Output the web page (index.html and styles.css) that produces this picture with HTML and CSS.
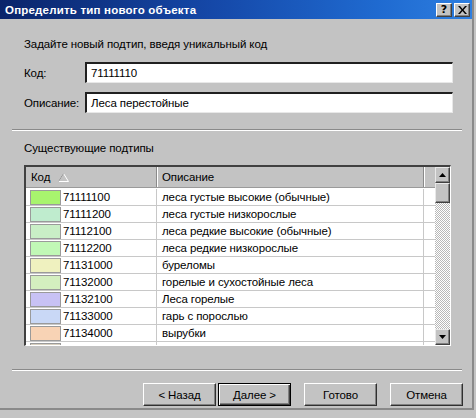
FILE: index.html
```html
<!DOCTYPE html>
<html>
<head>
<meta charset="utf-8">
<link rel="stylesheet" href="styles.css">
</head>
<body>
<div class="window">
  <div class="titlebar">
    <span class="title">Определить тип нового объекта</span>
    <div class="tbtns">
      <span class="tbtn help">?</span>
      <span class="tbtn close"><svg width="9" height="8" viewBox="0 0 9 8"><path d="M0 0h2l2.5 3 2.5-3h2l-3.5 4 3.5 4h-2l-2.5-3-2.5 3h-2l3.5-4z" fill="#000"/></svg></span>
    </div>
  </div>
  <div class="content">
    <div class="intro">Задайте новый подтип, введя уникальный код</div>
    <div class="field f1">
      <label class="lbl">Код:</label>
      <div class="input">71111110</div>
    </div>
    <div class="field f2">
      <label class="lbl">Описание:</label>
      <div class="input">Леса перестойные</div>
    </div>
    <div class="etched sep1"></div>
    <div class="section">Существующие подтипы</div>
    <div class="listbox">
      <div class="listmain">
        <div class="header">
          <div class="hcell h1">Код <svg class="sort" width="11" height="9" viewBox="0 0 11 9"><path d="M5.5 0.5L10.5 8.5H0.5Z" fill="none" stroke="#fff"/><path d="M5.5 0.5L0.5 8.5" stroke="#8c8c8c"/></svg></div>
          <div class="hcell h2">Описание</div>
          <div class="hcell h3"></div>
        </div>
        <div class="rows">
          <div class="row"><div class="c1"><span class="sw" style="background:#a8f46e"></span>71111100</div><div class="c2">леса густые высокие (обычные)</div><div class="c3"></div></div>
          <div class="row"><div class="c1"><span class="sw" style="background:#bfecce"></span>71111200</div><div class="c2">леса густые низкорослые</div><div class="c3"></div></div>
          <div class="row"><div class="c1"><span class="sw" style="background:#c9efc6"></span>71112100</div><div class="c2">леса редкие высокие (обычные)</div><div class="c3"></div></div>
          <div class="row"><div class="c1"><span class="sw" style="background:#c1f8b6"></span>71112200</div><div class="c2">леса редкие низкорослые</div><div class="c3"></div></div>
          <div class="row"><div class="c1"><span class="sw" style="background:#eff1bf"></span>71131000</div><div class="c2">буреломы</div><div class="c3"></div></div>
          <div class="row"><div class="c1"><span class="sw" style="background:#d4efbf"></span>71132000</div><div class="c2">горелые и сухостойные леса</div><div class="c3"></div></div>
          <div class="row"><div class="c1"><span class="sw" style="background:#c8c2f4"></span>71132100</div><div class="c2">Леса горелые</div><div class="c3"></div></div>
          <div class="row"><div class="c1"><span class="sw" style="background:#c9d8f6"></span>71133000</div><div class="c2">гарь с порослью</div><div class="c3"></div></div>
          <div class="row"><div class="c1"><span class="sw" style="background:#f8d3b5"></span>71134000</div><div class="c2">вырубки</div><div class="c3"></div></div>
          <div class="row"><div class="c1"><span class="sw" style="background:#d8d0c0"></span></div><div class="c2"></div><div class="c3"></div></div>
        </div>
      </div>
      <div class="scrollbar">
        <div class="sbtn"><svg width="7" height="4" viewBox="0 0 7 4"><path d="M3.5 0L7 4H0Z" fill="#000"/></svg></div>
        <div class="thumb"></div>
        <div class="track"></div>
        <div class="sbtn"><svg width="7" height="4" viewBox="0 0 7 4"><path d="M0 0H7L3.5 4Z" fill="#000"/></svg></div>
      </div>
    </div>
    <div class="etched sep2"></div>
    <div class="buttons">
      <div class="btn">&lt; Назад</div>
      <div class="btn default">Далее &gt;</div>
      <div class="btn gap">Готово</div>
      <div class="btn gap">Отмена</div>
    </div>
  </div>
</div>
</body>
</html>
```

FILE: styles.css
```css
html, body {
  margin: 0;
  padding: 0;
}
body {
  width: 476px;
  height: 418px;
  background: #c4c4c4;
  font-family: "Liberation Sans", Arial, sans-serif;
  font-size: 11.5px;
  letter-spacing: -0.1px;
  color: #000;
  overflow: hidden;
}
.window {
  width: 472px;
  height: 408px;
  background: #c3c3c3;
  border-right: 2px solid #8a8a8a;
  border-bottom: 2px solid #8a8a8a;
  display: flex;
  flex-direction: column;
}
.titlebar {
  height: 19px;
  flex: none;
  background: linear-gradient(to right, #0a246a 0%, #1548a8 45%, #1f6ad0 80%, #2d7ee0 100%);
  display: flex;
  align-items: center;
  justify-content: space-between;
  padding: 0 2px 0 5px;
}
.title {
  color: #fff;
  font-family: "Liberation Sans", Arial, sans-serif;
  font-weight: bold;
  font-size: 11.5px;
  letter-spacing: 0.2px;
}
.tbtns {
  display: flex;
  gap: 2px;
}
.tbtn {
  width: 16px;
  height: 14px;
  box-sizing: border-box;
  background: #c3c3c3;
  border-top: 1px solid #fff;
  border-left: 1px solid #fff;
  border-right: 1px solid #404040;
  border-bottom: 1px solid #404040;
  box-shadow: inset -1px -1px 0 #808080;
  display: flex;
  align-items: center;
  justify-content: center;
  font-weight: bold;
  font-size: 11px;
  line-height: 1;
  font-family: "DejaVu Sans", sans-serif;
  letter-spacing: 0;
}
.content {
  display: flex;
  flex-direction: column;
  padding: 0 0 0 24px;
}
.intro {
  margin-top: 19px;
  height: 13px;
  line-height: 13px;
}
.field {
  display: flex;
  align-items: center;
  height: 21px;
}
.f1 {
  margin-top: 11px;
}
.f2 {
  margin-top: 9px;
}
.lbl {
  width: 61px;
}
.input {
  width: 368px;
  height: 21px;
  box-sizing: border-box;
  background: #fff;
  border-top: 2px solid #202020;
  border-left: 2px solid #202020;
  border-right: 1px solid #e8e8e8;
  border-bottom: 1px solid #e8e8e8;
  padding: 0 4px;
  line-height: 18px;
}
.etched {
  height: 0;
  flex: none;
  border-top: 1px solid #8a8a8a;
  border-bottom: 1px solid #fff;
}
.sep1 {
  margin: 16px 0 0 -12px;
  width: 450px;
}
.section {
  margin-top: 11px;
  height: 13px;
  line-height: 13px;
}
.listbox {
  margin-top: 10px;
  width: 427px;
  height: 181px;
  flex: none;
  box-sizing: border-box;
  border-top: 2px solid #404040;
  border-left: 2px solid #404040;
  border-right: 1px solid #fff;
  border-bottom: 1px solid #fff;
  background: #fff;
  display: flex;
}
.listmain {
  flex: 1;
  overflow: hidden;
  display: flex;
  flex-direction: column;
}
.header {
  display: flex;
  height: 21px;
  flex: none;
  background: #c3c3c3;
  border-bottom: 1px solid #9a9a9a;
  box-sizing: border-box;
}
.hcell {
  display: flex;
  align-items: center;
  padding-left: 5px;
  box-sizing: border-box;
}
.h1 {
  width: 131px;
  border-right: 1px solid #8a8a8a;
  box-shadow: 1px 0 0 #fff;
}
.sort {
  margin-left: 8px;
}
.h2 {
  width: 267px;
  border-right: 1px solid #8a8a8a;
  box-shadow: 1px 0 0 #fff;
}
.h3 {
  flex: 1;
}
.row {
  display: flex;
  height: 17px;
  flex: none;
  box-sizing: border-box;
  border-bottom: 1px solid #c8c8c8;
}
.row:first-child {
  height: 18px;
  padding-top: 1px;
}
.c1 {
  width: 131px;
  display: flex;
  align-items: center;
  padding-left: 4px;
  box-sizing: border-box;
  border-right: 1px solid #c8c8c8;
}
.sw {
  width: 31px;
  height: 15px;
  flex: none;
  box-sizing: border-box;
  border: 1px solid #9a9a9a;
  margin-right: 2px;
}
.c2 {
  width: 267px;
  display: flex;
  align-items: center;
  padding-left: 5px;
  box-sizing: border-box;
  border-right: 1px solid #c8c8c8;
}
.c3 {
  flex: 1;
}
.scrollbar {
  width: 15px;
  flex: none;
  display: flex;
  flex-direction: column;
  background: repeating-conic-gradient(#fff 0 25%, #b8b8b8 0 50%) 0 0 / 2px 2px;
}
.sbtn, .thumb {
  height: 16px;
  flex: none;
  box-sizing: border-box;
  background: #c3c3c3;
  border-top: 1px solid #e8e8e8;
  border-left: 1px solid #e8e8e8;
  border-right: 1px solid #404040;
  border-bottom: 1px solid #404040;
  box-shadow: inset -1px -1px 0 #808080;
  display: flex;
  align-items: center;
  justify-content: center;
}
.thumb {
  height: 20px;
}
.track {
  flex: 1;
}
.sep2 {
  margin: 23px 0 0 -12px;
  width: 450px;
}
.buttons {
  display: flex;
  margin: 12px 0 0 119px;
}
.btn {
  width: 73px;
  height: 23px;
  box-sizing: border-box;
  background: #c3c3c3;
  border-top: 1px solid #fff;
  border-left: 1px solid #fff;
  border-right: 1px solid #303030;
  border-bottom: 1px solid #303030;
  box-shadow: inset -1px -1px 0 #808080;
  display: flex;
  align-items: center;
  justify-content: center;
}
.btn.default {
  border: 1px solid #000;
  box-shadow: inset 1px 1px 0 #fff, inset -1px -1px 0 #404040, inset -2px -2px 0 #808080;
  margin-left: 2px;
}
.btn.gap {
  margin-left: 13px;
}
```
